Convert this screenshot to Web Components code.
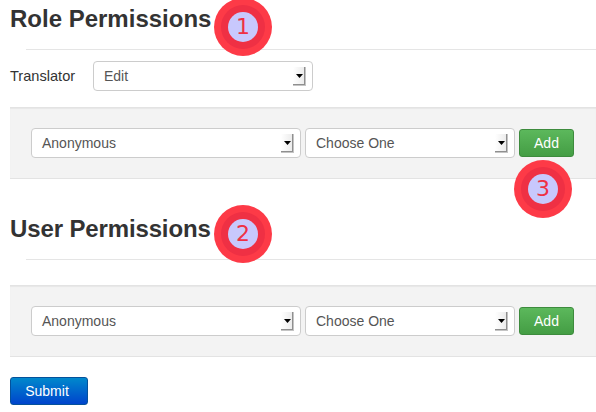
<!DOCTYPE html>
<html>
<head>
<meta charset="utf-8">
<title>Permissions</title>
<style>
    html, body { margin: 0; padding: 0; background: #fff; }
    body {
        width: 596px;
        height: 412px;
        overflow: hidden;
        position: relative;
        font-family: "Liberation Sans", Arial, sans-serif;
        color: #333;
    }
</style>
</head>
<body>
    <perm-heading style="height:50px">Role Permissions</perm-heading>
    <perm-row>
        <span slot="label">Translator</span>
        <perm-select style="width:220px">Edit</perm-select>
    </perm-row>
    <perm-band style="margin-top:16px">
        <perm-select style="width:270px">Anonymous</perm-select>
        <perm-select style="width:210px">Choose One</perm-select>
        <perm-button>Add</perm-button>
    </perm-band>
    <perm-heading style="height:81px;padding-top:31px;letter-spacing:-.13px">User Permissions</perm-heading>
    <perm-band style="margin-top:25px">
        <perm-select style="width:270px">Anonymous</perm-select>
        <perm-select style="width:210px">Choose One</perm-select>
        <perm-button>Add</perm-button>
    </perm-band>
    <perm-button kind="primary" style="margin:20px 0 0 10px">Submit</perm-button>

    <step-badge style="left:214px;top:-2px">1</step-badge>
    <step-badge style="left:214px;top:205px">2</step-badge>
    <step-badge style="left:514px;top:160px">3</step-badge>

<script>
class PermHeading extends HTMLElement {
    constructor() {
        super();
        this.attachShadow({ mode: "open" });
        this.shadowRoot.innerHTML = `
            <style>
                :host {
                    display: flex;
                    flex-direction: column;
                    justify-content: flex-end;
                    box-sizing: border-box;
                    padding-left: 10px;
                    position: relative;
                }
                h2 {
                    flex: 1;
                    margin: 0;
                    font-size: 24px;
                    line-height: 38px;
                    font-weight: bold;
                    color: #333;
                }
                hr {
                    margin: 0 0 0 16px;
                    border: 0;
                    border-top: 1px solid #e5e5e5;
                }
            </style>
            <h2><slot></slot></h2>
            <hr>
        `;
    }
}

class PermRow extends HTMLElement {
    constructor() {
        super();
        this.attachShadow({ mode: "open" });
        this.shadowRoot.innerHTML = `
            <style>
                :host {
                    display: flex;
                    align-items: center;
                    margin-top: 11px;
                    padding-left: 10px;
                    font-size: 14px;
                    color: #333;
                }
                .label { width: 83px; font-size: 14.6px; }
            </style>
            <div class="label"><slot name="label"></slot></div>
            <slot></slot>
        `;
    }
}

class PermSelect extends HTMLElement {
    constructor() {
        super();
        this.attachShadow({ mode: "open" });
        this.shadowRoot.innerHTML = `
            <style>
                :host {
                    display: flex;
                    align-items: center;
                    box-sizing: border-box;
                    height: 30px;
                    padding: 0 6px 0 10px;
                    background: #fff;
                    border: 1px solid #ccc;
                    border-radius: 4px;
                    font-size: 14px;
                    color: #555;
                }
                .text { flex: 1; }
                svg { display: block; margin-top: 1px; }
            </style>
            <div class="text"><slot></slot></div>
            <svg width="13" height="19" viewBox="0 0 13 19">
                <defs>
                    <linearGradient id="face" x1="0" x2="1" y1="0" y2="0">
                        <stop offset="0" stop-color="#ffffff"/>
                        <stop offset="1" stop-color="#ececec"/>
                    </linearGradient>
                </defs>
                <rect x="0" y="0" width="11" height="17" fill="url(#face)"/>
                <rect x="11" y="0" width="1" height="18" fill="#8f8f8f"/>
                <rect x="12" y="0" width="1" height="19" fill="#c4c4c4"/>
                <rect x="0" y="17" width="12" height="1" fill="#8f8f8f"/>
                <rect x="0" y="18" width="13" height="1" fill="#c4c4c4"/>
                <path d="M3 7h7l-3.500 4z" fill="#000"/>
            </svg>
        `;
    }
}

class PermBand extends HTMLElement {
    constructor() {
        super();
        this.attachShadow({ mode: "open" });
        this.shadowRoot.innerHTML = `
            <style>
                :host {
                    display: flex;
                    align-items: center;
                    gap: 4px;
                    box-sizing: border-box;
                    height: 72px;
                    margin-left: 10px;
                    padding: 0 21px;
                    background: #f3f3f3;
                    border-top: 1px solid #e3e3e3;
                    border-bottom: 1px solid #e3e3e3;
                    box-shadow: inset 0 1px 1px rgba(0,0,0,.05);
                }
            </style>
            <slot></slot>
        `;
    }
}

class PermButton extends HTMLElement {
    constructor() {
        super();
        this.attachShadow({ mode: "open" });
        this.shadowRoot.innerHTML = `
            <style>
                :host {
                    display: inline-flex;
                    align-items: center;
                    justify-content: center;
                    box-sizing: border-box;
                    width: 55px;
                    height: 28px;
                    border: 1px solid #3d8b3d;
                    border-radius: 3px;
                    background: linear-gradient(#5cb85c, #449d44);
                    color: #fff;
                    font-size: 14px;
                }
                :host([kind="primary"]) {
                    width: 78px;
                    padding-right: 4px;
                    border-color: #04519b;
                    background: linear-gradient(#0088cc, #0044cc);
                }
            </style>
            <slot></slot>
        `;
    }
}

class StepBadge extends HTMLElement {
    constructor() {
        super();
        this.attachShadow({ mode: "open" });
        this.shadowRoot.innerHTML = `
            <style>
                :host {
                    position: absolute;
                    display: flex;
                    align-items: center;
                    justify-content: center;
                    box-sizing: border-box;
                    width: 58px;
                    height: 58px;
                    border-radius: 50%;
                    background: #fd3a47;
                }
                .ring {
                    display: flex;
                    align-items: center;
                    justify-content: center;
                    box-sizing: border-box;
                    width: 44px;
                    height: 44px;
                    border-radius: 50%;
                    background: #ef3044;
                }
                .core {
                    width: 30px;
                    height: 30px;
                    border-radius: 50%;
                    background: #c8c8fd;
                    color: #ef3044;
                    font: 22px/30px "DejaVu Sans", sans-serif;
                    text-align: center;
                }
            </style>
            <div class="ring"><div class="core"><slot></slot></div></div>
        `;
    }
}

customElements.define("perm-heading", PermHeading);
customElements.define("perm-row", PermRow);
customElements.define("perm-select", PermSelect);
customElements.define("perm-band", PermBand);
customElements.define("perm-button", PermButton);
customElements.define("step-badge", StepBadge);
</script>
</body>
</html>
